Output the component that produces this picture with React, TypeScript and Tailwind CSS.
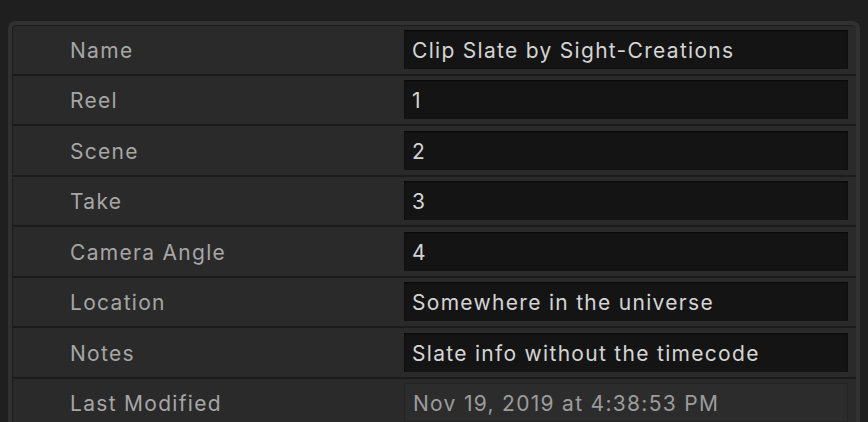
import React from "react";

const rows: { label: string; value: string; disabled?: boolean }[] = [
  { label: "Name", value: "Clip Slate by Sight-Creations" },
  { label: "Reel", value: "1" },
  { label: "Scene", value: "2" },
  { label: "Take", value: "3" },
  { label: "Camera Angle", value: "4" },
  { label: "Location", value: "Somewhere in the universe" },
  { label: "Notes", value: "Slate info without the timecode" },
  { label: "Last Modified", value: "Nov 19, 2019 at 4:38:53 PM", disabled: true },
];

export default function App() {
  return (
    <div
      className="w-[868px] h-[422px] overflow-hidden bg-[#1f1f1f] pt-[21px] pl-[8px] pr-[8px]"
      style={{ fontFamily: "Inter, 'Liberation Sans', Arial, sans-serif" }}
    >
      <div className="w-[852px] rounded-t-[8px] border-[4px] border-b-0 border-[#313131] bg-[#2a2a2a] shadow-[inset_1px_1px_0_#1c1c1c]">
        {rows.map((r) => (
          <div
            key={r.label}
            className="flex items-center h-[50.5px] border-b-2 border-[#1b1b1b]"
          >
            <div className="w-[392px] pl-[58px] pt-[2px] text-[21px] tracking-[1.3px] text-[#a6a6a6]">
              {r.label}
            </div>
            <div
              className={
                r.disabled
                  ? "w-[444px] h-[39px] flex items-center pl-[8px] pt-[2px] bg-[#2c2c2c] border border-[#242424] text-[21px] tracking-[1.3px] text-[#9c9c9c]"
                  : "w-[444px] h-[39px] flex items-center pl-[8px] pt-[2px] bg-[#141414] shadow-[inset_0_1px_2px_rgba(0,0,0,0.7)] text-[21px] tracking-[1.3px] text-[#d4d4d4]"
              }
            >
              {r.value}
            </div>
          </div>
        ))}
      </div>
    </div>
  );
}
